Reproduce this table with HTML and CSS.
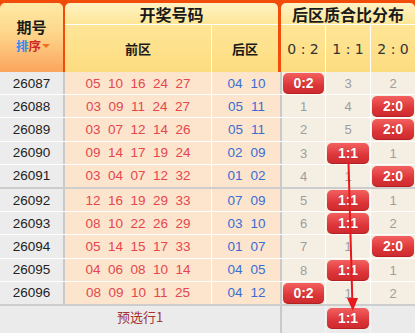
FILE: index.html
```html
<!DOCTYPE html>
<html lang="zh-CN">
<head>
<meta charset="utf-8">
<title>后区质合比分布</title>
<link rel="stylesheet" href="styles.css">
</head>
<body>
<div class="board">
  <div class="head">
    <div class="h-period">
      <div class="h-title">期号</div>
      <div class="sort"><span class="s1">排</span><span class="s2">序</span><span class="tri"></span></div>
    </div>
    <div class="h-group h-draw">
      <div class="h-top">开奖号码</div>
      <div class="h-sub">
        <div class="sub sub-front">前区</div>
        <div class="sub sub-back">后区</div>
      </div>
    </div>
    <div class="h-group h-ratio">
      <div class="h-top">后区质合比分布</div>
      <div class="h-sub">
        <div class="sub sub-r">0 : 2</div>
        <div class="sub sub-r">1 : 1</div>
        <div class="sub sub-r last">2 : 0</div>
      </div>
    </div>
  </div>

  <div class="rows">
    <div class="row">
      <div class="c-period">26087</div>
      <div class="c-front"><span>05</span><span>10</span><span>16</span><span>24</span><span>27</span></div>
      <div class="c-back"><span>04</span><span>10</span></div>
      <div class="c-r"><b class="badge">0:2</b></div>
      <div class="c-r">3</div>
      <div class="c-r last">2</div>
    </div>
    <div class="row">
      <div class="c-period">26088</div>
      <div class="c-front"><span>03</span><span>09</span><span>11</span><span>24</span><span>27</span></div>
      <div class="c-back"><span>05</span><span>11</span></div>
      <div class="c-r">1</div>
      <div class="c-r">4</div>
      <div class="c-r last"><b class="badge">2:0</b></div>
    </div>
    <div class="row">
      <div class="c-period">26089</div>
      <div class="c-front"><span>03</span><span>07</span><span>12</span><span>14</span><span>26</span></div>
      <div class="c-back"><span>05</span><span>11</span></div>
      <div class="c-r">2</div>
      <div class="c-r">5</div>
      <div class="c-r last"><b class="badge">2:0</b></div>
    </div>
    <div class="row">
      <div class="c-period">26090</div>
      <div class="c-front"><span>09</span><span>14</span><span>17</span><span>19</span><span>24</span></div>
      <div class="c-back"><span>02</span><span>09</span></div>
      <div class="c-r">3</div>
      <div class="c-r"><b class="badge">1:1</b></div>
      <div class="c-r last">1</div>
    </div>
    <div class="row sep">
      <div class="c-period">26091</div>
      <div class="c-front"><span>03</span><span>04</span><span>07</span><span>12</span><span>32</span></div>
      <div class="c-back"><span>01</span><span>02</span></div>
      <div class="c-r">4</div>
      <div class="c-r">1</div>
      <div class="c-r last"><b class="badge">2:0</b></div>
    </div>
    <div class="row">
      <div class="c-period">26092</div>
      <div class="c-front"><span>12</span><span>16</span><span>19</span><span>29</span><span>33</span></div>
      <div class="c-back"><span>07</span><span>09</span></div>
      <div class="c-r">5</div>
      <div class="c-r"><b class="badge">1:1</b></div>
      <div class="c-r last">1</div>
    </div>
    <div class="row">
      <div class="c-period">26093</div>
      <div class="c-front"><span>08</span><span>10</span><span>22</span><span>26</span><span>29</span></div>
      <div class="c-back"><span>03</span><span>10</span></div>
      <div class="c-r">6</div>
      <div class="c-r"><b class="badge">1:1</b></div>
      <div class="c-r last">2</div>
    </div>
    <div class="row">
      <div class="c-period">26094</div>
      <div class="c-front"><span>05</span><span>14</span><span>15</span><span>17</span><span>33</span></div>
      <div class="c-back"><span>01</span><span>07</span></div>
      <div class="c-r">7</div>
      <div class="c-r">1</div>
      <div class="c-r last"><b class="badge">2:0</b></div>
    </div>
    <div class="row">
      <div class="c-period">26095</div>
      <div class="c-front"><span>04</span><span>06</span><span>08</span><span>10</span><span>14</span></div>
      <div class="c-back"><span>04</span><span>05</span></div>
      <div class="c-r">8</div>
      <div class="c-r"><b class="badge">1:1</b></div>
      <div class="c-r last">1</div>
    </div>
    <div class="row sep">
      <div class="c-period">26096</div>
      <div class="c-front"><span>08</span><span>09</span><span>10</span><span>11</span><span>25</span></div>
      <div class="c-back"><span>04</span><span>12</span></div>
      <div class="c-r"><b class="badge">0:2</b></div>
      <div class="c-r">1</div>
      <div class="c-r last">2</div>
    </div>
  </div>

  <div class="foot">
    <div class="f-label">预选行1</div>
    <div class="f-r"></div>
    <div class="f-r"><b class="badge">1:1</b></div>
    <div class="f-r last"></div>
  </div>

  <svg class="arrow" width="415" height="333" viewBox="0 0 415 333">
    <line x1="348.5" y1="162" x2="352.3" y2="300" stroke="#e8191c" stroke-width="2"/>
    <polygon points="347,298 358,298 352.8,311" fill="#e8191c"/>
  </svg>
</div>
</body>
</html>
```

FILE: styles.css
```css
html, body {
  margin: 0;
  padding: 0;
  background: #ffffff;
}

body {
  font-family: "Liberation Sans", "Noto Sans CJK SC", sans-serif;
  color: #222;
}

.board {
  position: relative;
  width: 415px;
  height: 333px;
  overflow: hidden;
}

/* ---------- header ---------- */
.head {
  display: flex;
  height: 72px;
  padding-top: 3px;
  box-sizing: border-box;
  background: #f24c0a;
}

.h-period {
  width: 63px;
  border-radius: 5px 5px 0 0;
  background: linear-gradient(#feeaa4, #fdd58a 45%, #fca45d);
  display: flex;
  flex-direction: column;
  align-items: center;
  padding-top: 13px;
  box-sizing: border-box;
}

.h-title {
  font-family: "Noto Sans CJK SC", sans-serif;
  font-weight: bold;
  font-size: 15px;
  line-height: 21px;
  color: #1a1a1a;
}

.sort {
  display: flex;
  align-items: center;
  font-family: "Noto Sans CJK SC", sans-serif;
  font-weight: bold;
  font-size: 12.5px;
  line-height: 16px;
  margin-top: 1px;
  padding-left: 3px;
}

.s1 { color: #2b8ef0; }
.s2 { color: #cf2a2a; }

.tri {
  width: 0;
  height: 0;
  margin-left: 1px;
  border-left: 4px solid transparent;
  border-right: 4px solid transparent;
  border-top: 4px solid #f2701e;
}

.h-group {
  display: flex;
  flex-direction: column;
}

.h-draw {
  width: 213px;
  margin-left: 2px;
}

.h-ratio {
  width: 134px;
  margin-left: 3px;
}

.h-top {
  height: 21px;
  display: flex;
  align-items: center;
  justify-content: center;
  border-radius: 5px 5px 0 0;
  font-family: "Noto Sans CJK SC", sans-serif;
  font-weight: bold;
  font-size: 16px;
  line-height: 20px;
  color: #1a1a1a;
  background: linear-gradient(#fff3c4, #fde696);
  border-bottom: 1px solid #ffffff;
}

.h-sub {
  flex: 1;
  display: flex;
  background: linear-gradient(#fee697, #fddc80);
}

.sub {
  display: flex;
  align-items: center;
  justify-content: center;
  border-right: 1px solid #ffffff;
  font-family: "Noto Sans CJK SC", sans-serif;
  font-weight: bold;
  font-size: 13px;
  color: #1a1a1a;
}

.sub-front { width: 147px; box-sizing: border-box; }
.sub-back { flex: 1; border-right: none; }

.sub-r {
  width: 45px;
  box-sizing: border-box;
  font-family: "DejaVu Sans", sans-serif;
  font-weight: normal;
  font-size: 14px;
  color: #333;
}

.sub-r.last { width: 44px; border-right: none; }

/* ---------- rows ---------- */
.row {
  display: grid;
  grid-template-columns: 65px 147px 70px 44px 45px 44px;
  height: 23.2px;
  box-sizing: border-box;
  border-bottom: 1px solid #ffffff;
}

.row.sep {
  height: 24.2px;
  border-bottom: 2px solid #cdcdcd;
}

.row > div {
  display: flex;
  align-items: center;
  justify-content: center;
  box-sizing: border-box;
  font-size: 13.5px;
}

.c-period {
  background: #ececec;
  border-right: 2px solid #c9c9c9;
  color: #222;
}

.c-front {
  background: #fde4cd;
  border-right: 1px solid #ffffff;
  color: #e4474c;
  gap: 7.5px;
}

.c-back {
  background: #fde4cd;
  border-right: 2px solid #c9c9c9;
  color: #3a6dd2;
  gap: 8px;
  padding-left: 1px;
}

.c-r {
  background: #f5efe3;
  border-right: 1px solid #ffffff;
  color: #9d9d9d;
}

.row > .c-r {
  font-size: 13px;
  align-items: flex-start;
  padding-top: 1px;
  line-height: 21px;
}

.c-r.last { border-right: none; }

.badge {
  display: block;
  width: 100%;
  height: 21px;
  margin: 0 1px;
  border-radius: 5px;
  background: linear-gradient(#f3605f, #dc3538 60%, #cc2a2e);
  box-shadow: inset 0 -1px 0 rgba(120, 0, 0, 0.25);
  color: #ffffff;
  font-weight: bold;
  font-size: 14px;
  line-height: 21px;
  text-align: center;
  text-shadow: 0 0 1px rgba(120, 0, 0, 0.4);
}

/* ---------- footer ---------- */
.foot {
  display: grid;
  grid-template-columns: 282px 44px 45px 44px;
  height: 27px;
  background: #ebebeb;
}

.foot > div {
  box-sizing: border-box;
  display: flex;
  justify-content: center;
}

.f-label {
  border-right: 2px solid #c9c9c9;
  font-family: "Noto Sans CJK SC", sans-serif;
  font-size: 13px;
  color: #a33434;
  line-height: 22px;
}

.f-r {
  border-right: 1px solid #f6f6f6;
  padding-top: 2px;
}

.f-r.last { border-right: none; }

/* ---------- overlay arrow ---------- */
.arrow {
  position: absolute;
  left: 0;
  top: 0;
  pointer-events: none;
}
```
